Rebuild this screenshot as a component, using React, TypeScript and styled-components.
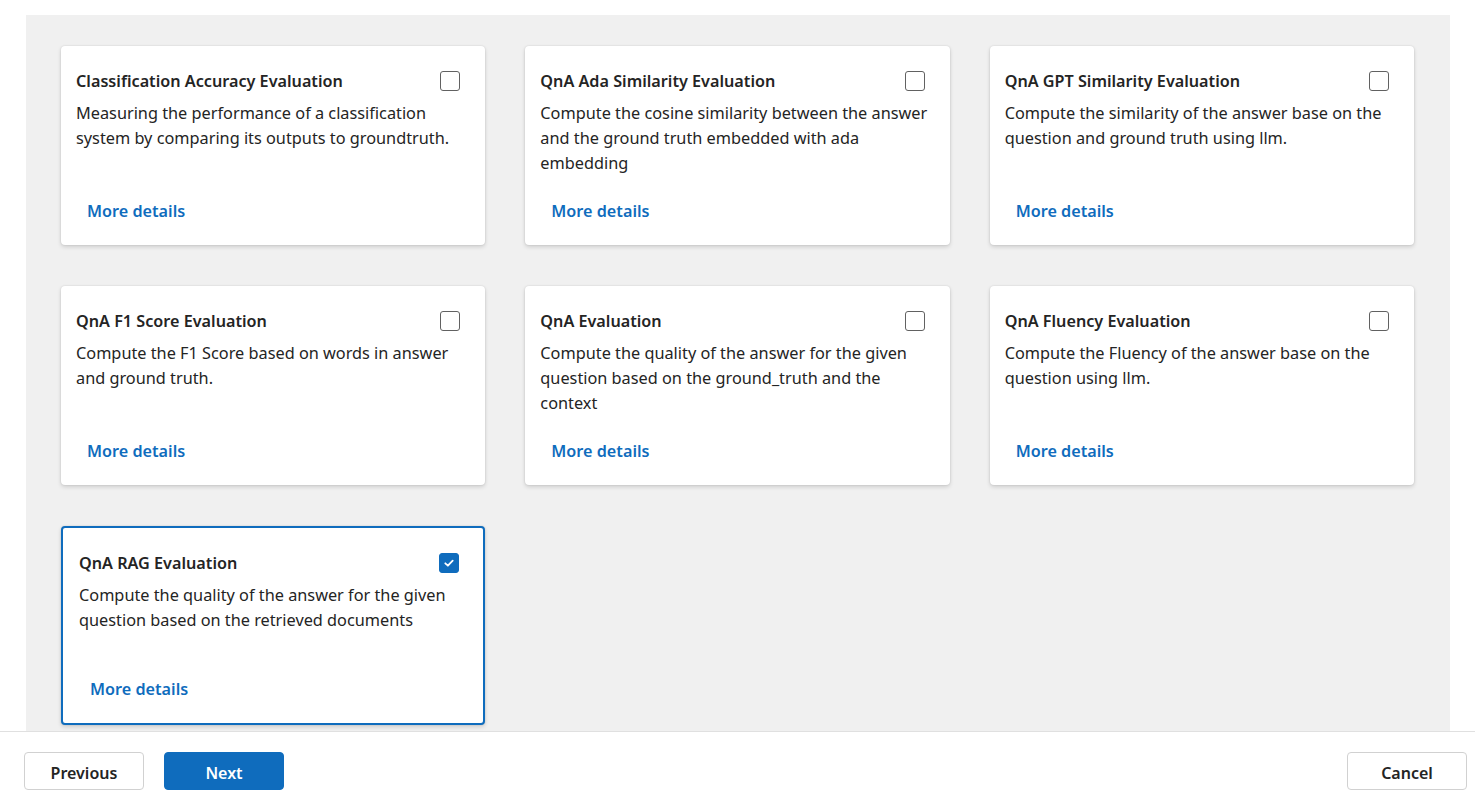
import { createGlobalStyle, styled } from 'styled-components';

const GlobalStyle = createGlobalStyle`
  html, body {
    margin: 0;
    padding: 0;
    background: #ffffff;
    font-family: 'Noto Sans', 'Open Sans', sans-serif;
    color: #242424;
  }
`;

const Page = styled.div`
  width: 1475px;
  height: 807px;
  display: flex;
  flex-direction: column;
  overflow: hidden;
`;

const Scroll = styled.div`
  height: 731px;
  padding: 15px 25px 0 26px;
  box-sizing: border-box;
  overflow: hidden;
`;

const Panel = styled.div`
  height: 716px;
  background: #f0f0f0;
  padding: 31px 36px 0 35px;
  box-sizing: border-box;
  display: grid;
  grid-template-columns: repeat(3, 1fr);
  grid-auto-rows: 199px;
  column-gap: 40px;
  row-gap: 41px;
  align-content: start;
`;

const Card = styled.div<{ $selected?: boolean }>`
  background: #ffffff;
  border-radius: 4px;
  box-sizing: border-box;
  display: flex;
  flex-direction: column;
  padding: ${(p) => (p.$selected ? '24px 11px 0 16px' : '24px 12px 0 15px')};
  border: ${(p) => (p.$selected ? '2px solid #0f6cbd' : 'none')};
  box-shadow: 0 0 2px rgba(0, 0, 0, 0.12), 0 2px 4px rgba(0, 0, 0, 0.14);
`;

const CardHead = styled.div`
  display: flex;
  justify-content: space-between;
  align-items: center;
  height: 22px;
`;

const Title = styled.div`
  font-size: 16.2px;
  font-weight: 600;
  line-height: 22px;
`;

const Box = styled.span<{ $checked?: boolean }>`
  width: 20px;
  height: 20px;
  margin-right: 13px;
  box-sizing: border-box;
  border-radius: 3px;
  border: 1px solid ${(p) => (p.$checked ? '#0f6cbd' : '#616161')};
  background: ${(p) => (p.$checked ? '#0f6cbd' : '#ffffff')};
  display: flex;
  align-items: center;
  justify-content: center;
`;

const Desc = styled.p`
  margin: 9px 0 0;
  font-size: 16.3px;
  line-height: 25px;
  flex: 1;
`;

const More = styled.a`
  align-self: flex-start;
  margin: 0 0 22px 11px;
  font-size: 16.2px;
  font-weight: 600;
  line-height: 24px;
  color: #0f6cbd;
  text-decoration: none;
  cursor: pointer;
`;

const Footer = styled.div`
  flex: 1;
  border-top: 1px solid #e0e0e0;
  display: flex;
  align-items: flex-start;
  padding: 20px 8px 0 24px;
  gap: 20px;
`;

const Button = styled.button<{ $primary?: boolean }>`
  width: 120px;
  height: 38px;
  border-radius: 4px;
  font-family: inherit;
  font-size: 16px;
  font-weight: 600;
  line-height: 36px;
  padding: 2px 0 0;
  cursor: pointer;
  border: 1px solid ${(p) => (p.$primary ? '#0f6cbd' : '#d1d1d1')};
  background: ${(p) => (p.$primary ? '#0f6cbd' : '#ffffff')};
  color: ${(p) => (p.$primary ? '#ffffff' : '#242424')};
`;

const Spacer = styled.div`
  flex: 1;
`;

const items = [
  {
    title: 'Classification Accuracy Evaluation',
    desc: 'Measuring the performance of a classification system by comparing its outputs to groundtruth.',
  },
  {
    title: 'QnA Ada Similarity Evaluation',
    desc: 'Compute the cosine similarity between the answer and the ground truth embedded with ada embedding',
  },
  {
    title: 'QnA GPT Similarity Evaluation',
    desc: 'Compute the similarity of the answer base on the question and ground truth using llm.',
  },
  {
    title: 'QnA F1 Score Evaluation',
    desc: 'Compute the F1 Score based on words in answer and ground truth.',
  },
  {
    title: 'QnA Evaluation',
    desc: 'Compute the quality of the answer for the given question based on the ground_truth and the context',
  },
  {
    title: 'QnA Fluency Evaluation',
    desc: 'Compute the Fluency of the answer base on the question using llm.',
  },
  {
    title: 'QnA RAG Evaluation',
    desc: 'Compute the quality of the answer for the given question based on the retrieved documents',
    selected: true,
  },
];

export default function App() {
  return (
    <Page>
      <GlobalStyle />
      <Scroll>
        <Panel>
          {items.map((it) => (
            <Card key={it.title} $selected={it.selected}>
              <CardHead>
                <Title>{it.title}</Title>
                <Box $checked={it.selected}>
                  {it.selected && (
                    <svg width='12' height='12' viewBox='0 0 12 12'>
                      <path
                        d='M2.3 6.3 L4.9 8.7 L9.7 3.6'
                        fill='none'
                        stroke='#ffffff'
                        strokeWidth='1.8'
                        strokeLinecap='round'
                        strokeLinejoin='round'
                      />
                    </svg>
                  )}
                </Box>
              </CardHead>
              <Desc>{it.desc}</Desc>
              <More>More details</More>
            </Card>
          ))}
        </Panel>
      </Scroll>
      <Footer>
        <Button>Previous</Button>
        <Button $primary>Next</Button>
        <Spacer />
        <Button>Cancel</Button>
      </Footer>
    </Page>
  );
}
